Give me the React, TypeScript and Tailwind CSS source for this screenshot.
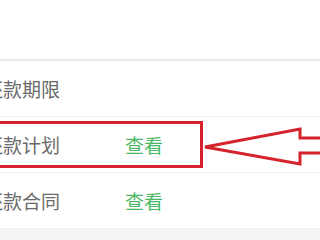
const rows = [
  { label: '还款期限', link: '' },
  { label: '还款计划', link: '查看' },
  { label: '还款合同', link: '查看' },
];

export default function App() {
  return (
    <div
      className="relative w-[320px] h-[240px] overflow-hidden bg-[#f4f4f4]"
      style={{ fontFamily: '"Noto Sans CJK SC", "Noto Sans", sans-serif' }}
    >
      <div className="h-[61px] bg-white border-b-2 border-[#e8e8e8]" />
      <div className="bg-white">
        {rows.map(r => (
          <div key={r.label} className="h-14 flex items-center border-b border-[#f0f0f0]">
            <span className="ml-[-16px] w-[141px] shrink-0 text-[19px] leading-none text-[#6a6a6a]">{r.label}</span>
            <span className="text-[19px] leading-none text-[#4cb866]">{r.link}</span>
          </div>
        ))}
      </div>

      {/* annotation box + arrow */}
      <div className="absolute left-[-10px] top-[121px] w-[213px] h-[47px] border-[3px] border-[#d4232d]" />
      <svg className="absolute left-0 top-0" width="320" height="240" viewBox="0 0 320 240">
        <path
          d="M323 138 H300 V129 L205 147 L300 164 V153 H323"
          fill="none"
          stroke="#d4232d"
          strokeWidth="3"
          strokeLinejoin="miter"
        />
      </svg>
    </div>
  );
}
